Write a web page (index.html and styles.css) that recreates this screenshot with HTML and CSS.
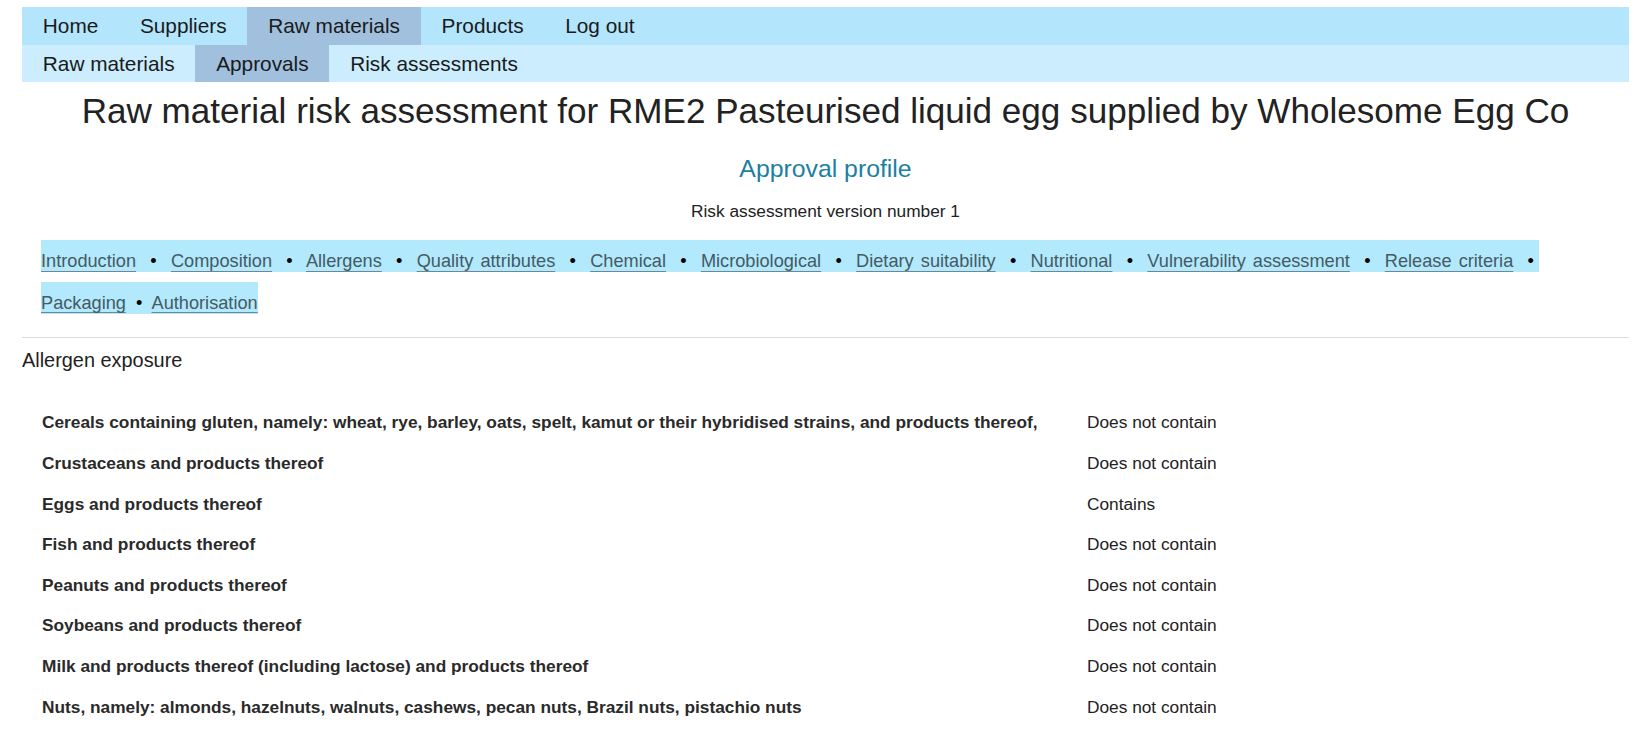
FILE: index.html
```html
<!DOCTYPE html>
<html lang="en">
<head>
    <meta charset="UTF-8">
    <meta name="viewport" content="width=device-width, initial-scale=1.0">
    <title>Raw material risk assessment</title>
    <link rel="stylesheet" href="styles.css">
</head>
<body>

    <nav class="main-nav">
        <a href="#">Home</a>
        <a href="#">Suppliers</a>
        <a href="#" class="active">Raw materials</a>
        <a href="#">Products</a>
        <a href="#">Log out</a>
    </nav>

    <nav class="sub-nav">
        <a href="#">Raw materials</a>
        <a href="#" class="active">Approvals</a>
        <a href="#">Risk assessments</a>
    </nav>

    <main class="page">
        <h1 class="page-title">Raw material risk assessment for RME2 Pasteurised liquid egg supplied by Wholesome Egg Co</h1>
        <h2 class="profile-title">Approval profile</h2>
        <p class="version">Risk assessment version number 1</p>

        <!-- Jump links to each section of the assessment -->
        <div class="section-links">
            <span class="link-strip"><a href="#">Introduction</a>&nbsp; &bull;&nbsp; <a href="#">Composition</a>&nbsp; &bull;&nbsp; <a href="#">Allergens</a>&nbsp; &bull;&nbsp; <a href="#">Quality attributes</a>&nbsp; &bull;&nbsp; <a href="#">Chemical</a>&nbsp; &bull;&nbsp; <a href="#">Microbiological</a>&nbsp; &bull;&nbsp; <a href="#">Dietary suitability</a>&nbsp; &bull;&nbsp; <a href="#">Nutritional</a>&nbsp; &bull;&nbsp; <a href="#">Vulnerability assessment</a>&nbsp; &bull;&nbsp; <a href="#">Release criteria</a>&nbsp; &bull;&nbsp; <a href="#">Packaging</a>&nbsp; &bull;&nbsp; <a href="#">Authorisation</a></span>
        </div>

        <hr class="divider">

        <h3 class="section-heading">Allergen exposure</h3>

        <table class="allergen-table">
            <tr>
                <td class="allergen">Cereals containing gluten, namely: wheat, rye, barley, oats, spelt, kamut or their hybridised strains, and products thereof,</td>
                <td>Does not contain</td>
            </tr>
            <tr>
                <td class="allergen">Crustaceans and products thereof</td>
                <td>Does not contain</td>
            </tr>
            <tr>
                <td class="allergen">Eggs and products thereof</td>
                <td>Contains</td>
            </tr>
            <tr>
                <td class="allergen">Fish and products thereof</td>
                <td>Does not contain</td>
            </tr>
            <tr>
                <td class="allergen">Peanuts and products thereof</td>
                <td>Does not contain</td>
            </tr>
            <tr>
                <td class="allergen">Soybeans and products thereof</td>
                <td>Does not contain</td>
            </tr>
            <tr>
                <td class="allergen">Milk and products thereof (including lactose) and products thereof</td>
                <td>Does not contain</td>
            </tr>
            <tr>
                <td class="allergen">Nuts, namely: almonds, hazelnuts, walnuts, cashews, pecan nuts, Brazil nuts, pistachio nuts</td>
                <td>Does not contain</td>
            </tr>
        </table>
    </main>

</body>
</html>
```

FILE: styles.css
```css
body {
    font-family: 'Liberation Sans', Arial, Helvetica, sans-serif;
    margin: 7px 9px 0 22px;
    padding: 0;
    color: #222;
    background-color: #fff;
}

/* Top level navigation */
.main-nav,
.sub-nav {
    display: flex;
    font-size: 20.8px;
}

.main-nav {
    background-color: #b3e5fc;
    line-height: 38px;
}

.sub-nav {
    background-color: #cbedfd;
    line-height: 37px;
}

.main-nav a,
.sub-nav a {
    padding: 0 1em;
    color: #1a1a1a;
    text-decoration: none;
}

.main-nav a.active,
.sub-nav a.active {
    background-color: #a0c0de;
}

/* Headings */
.page-title {
    font-size: 35.1px;
    line-height: 40px;
    font-weight: normal;
    text-align: center;
    margin: 8.7px 0 0;
    color: #222;
}

.profile-title {
    font-size: 24.8px;
    line-height: 28.5px;
    font-weight: normal;
    text-align: center;
    margin: 24.3px 0 0;
    color: #1c7fa2;
}

.version {
    font-size: 17.3px;
    line-height: 20px;
    text-align: center;
    margin: 17.5px 0 0;
}

/* Section jump links */
.section-links {
    width: 1498px;
    margin: 20px 0 0 19px;
    font-size: 18.2px;
    line-height: 41.3px;
    text-align: justify;
}

.link-strip {
    background-color: #b3e9fc;
    padding: 10.5px 0 1.5px;
    color: #000;
}

.link-strip a {
    color: #455a64;
    text-decoration: underline;
    text-decoration-color: #6e8794;
    text-underline-offset: 4px;
}

.divider {
    border: 0;
    border-top: 1px solid #dcdcdc;
    margin: 13.1px 0 0;
}

.section-heading {
    font-size: 19.9px;
    line-height: 23px;
    font-weight: normal;
    margin: 11px 0 0;
}

/* Allergen table */
.allergen-table {
    border-collapse: collapse;
    margin-top: 30.5px;
    font-size: 17.3px;
    line-height: 20px;
}

.allergen-table td {
    padding: 10.3px 20px;
    white-space: nowrap;
}

.allergen-table td.allergen {
    font-weight: bold;
    width: 1005px;
    color: #2a2a2a;
}
```
